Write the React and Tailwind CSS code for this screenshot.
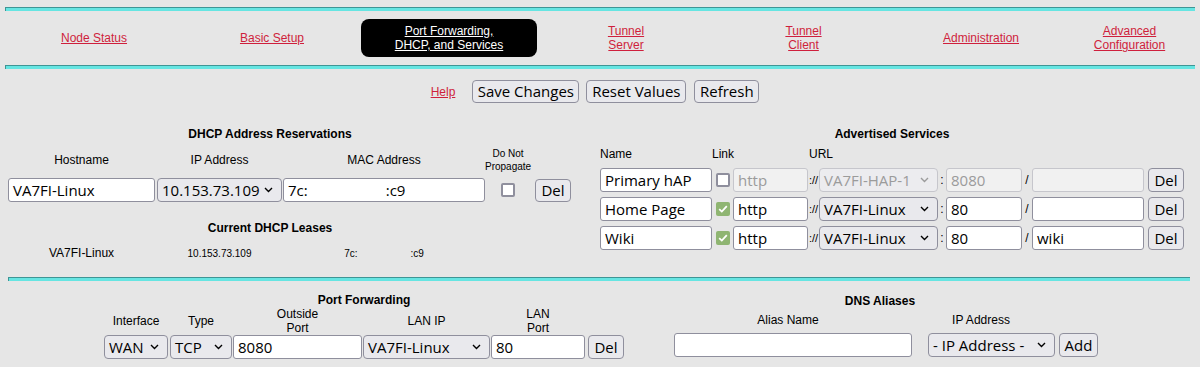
import React from "react";
import clsx from "clsx";

const formFont = "font-['Open_Sans',sans-serif] text-[15px]";

const Chevron = () => (
  <svg width="9" height="6" viewBox="0 0 9 6" className="shrink-0">
    <path d="M1 1l3.5 3.5L8 1" fill="none" stroke="currentColor" strokeWidth="1.4" />
  </svg>
);

const Field = ({ className, value, disabled, children }) => (
  <div
    className={clsx(
      "h-[24px] shrink-0 flex items-center px-[4px] rounded-[3px] border whitespace-nowrap overflow-hidden",
      formFont,
      disabled ? "border-[#c6c6cc] bg-[#f1f1f1] text-[#9b9b9b]" : "border-[#8f8f9d] bg-white text-black",
      className
    )}
  >
    {children ?? value}
  </div>
);

const Select = ({ className, value, disabled }) => (
  <div
    className={clsx(
      "h-[24px] shrink-0 flex items-center justify-between pl-[4px] pr-[8px] rounded-[4px] border whitespace-nowrap overflow-hidden",
      formFont,
      disabled ? "border-[#c6c6cc] bg-[#ececef] text-[#9b9b9b]" : "border-[#8f8f9d] bg-[#e9e9ed] text-black",
      className
    )}
  >
    <span>{value}</span>
    <Chevron />
  </div>
);

const Button = ({ className, children }) => (
  <div
    className={clsx(
      "h-[23px] shrink-0 flex items-center justify-center rounded-[4px] border border-[#8f8f9d] bg-[#e9e9ed] text-black",
      formFont,
      className
    )}
  >
    {children}
  </div>
);

const Check = ({ checked }) =>
  checked ? (
    <div className="w-[14px] h-[14px] shrink-0 rounded-[2px] bg-[#8fb572] flex items-center justify-center">
      <svg width="10" height="8" viewBox="0 0 10 8">
        <path d="M1.2 4.2l2.6 2.4L8.8 1.2" fill="none" stroke="white" strokeWidth="1.8" />
      </svg>
    </div>
  ) : (
    <div className="w-[14px] h-[14px] shrink-0 rounded-[2px] border-2 border-[#8f8f9d] bg-white" />
  );

const Rule = ({ className }) => (
  <div className={clsx("h-[4px] border-t border-l border-[#3f9595] bg-[#66e5e2]", className)} />
);

const NavLink = ({ children }) => (
  <a className="text-[#cf1f3c] underline leading-[14px]">{children}</a>
);

const services = [
  { name: "Primary hAP", link: false, proto: "http", host: "VA7FI-HAP-1", port: "8080", path: "", disabled: true },
  { name: "Home Page", link: true, proto: "http", host: "VA7FI-Linux", port: "80", path: "" },
  { name: "Wiki", link: true, proto: "http", host: "VA7FI-Linux", port: "80", path: "wiki" },
];

export default function App() {
  return (
    <div className="w-[1200px] h-[367px] overflow-hidden bg-[#e6e6e6] pt-[7px] font-['Liberation_Sans',Arial,sans-serif] text-[12px] text-black">
      <Rule className="mx-[5px]" />
      <nav className="mx-[5px] h-[54px] grid grid-cols-[178px_178px_176px_178px_177px_178px_1fr] items-center text-center">
        <div><NavLink>Node Status</NavLink></div>
        <div><NavLink>Basic Setup</NavLink></div>
        <div className="h-[38px] rounded-[8px] bg-black text-white flex flex-col items-center justify-center leading-[14px]">
          <a className="underline">Port Forwarding,</a>
          <a className="underline">DHCP, and Services</a>
        </div>
        <div className="flex flex-col items-center"><NavLink>Tunnel</NavLink><NavLink>Server</NavLink></div>
        <div className="flex flex-col items-center"><NavLink>Tunnel</NavLink><NavLink>Client</NavLink></div>
        <div><NavLink>Administration</NavLink></div>
        <div className="flex flex-col items-center pr-[6px]"><NavLink>Advanced</NavLink><NavLink>Configuration</NavLink></div>
      </nav>
      <Rule className="mx-[5px]" />

      <div className="mt-[11px] h-[23px] flex items-center justify-center pr-[10px]">
        <NavLink>Help</NavLink>
        <Button className="ml-[17px] w-[107px]">Save Changes</Button>
        <Button className="ml-[7px] w-[100px]">Reset Values</Button>
        <Button className="ml-[8px] w-[65px]">Refresh</Button>
      </div>

      <div className="mt-[24px] h-[150px] flex">
        {/* DHCP */}
        <div className="w-[600px] shrink-0 flex flex-col">
          <div className="w-[540px] h-[14px] leading-[14px] text-center font-bold">DHCP Address Reservations</div>
          <div className="mt-[5px] h-[28px] flex items-center pl-[8px] text-center">
            <div className="w-[147px]">Hostname</div>
            <div className="ml-[2px] w-[125px]">IP Address</div>
            <div className="ml-[1px] w-[202px]">MAC Address</div>
            <div className="w-[46px] text-[10px] leading-[13px]">Do Not<br />Propagate</div>
          </div>
          <div className="mt-[4px] h-[24px] flex items-center pl-[8px]">
            <Field className="w-[147px]" value="VA7FI-Linux" />
            <Select className="ml-[2px] w-[125px]" value="10.153.73.109" />
            <Field className="ml-[1px] w-[202px]">
              <span>7c:</span>
              <span className="ml-[78px]">:c9</span>
            </Field>
            <div className="w-[46px] flex justify-center"><Check /></div>
            <Button className="ml-[4px] w-[36px]">Del</Button>
          </div>
          <div className="mt-[19px] w-[540px] h-[14px] leading-[14px] text-center font-bold">Current DHCP Leases</div>
          <div className="mt-[11px] h-[14px] flex items-center pl-[8px] text-center">
            <div className="w-[147px]">VA7FI-Linux</div>
            <div className="ml-[2px] w-[125px] text-[10px]">10.153.73.109</div>
            <div className="ml-[1px] w-[202px] flex justify-center gap-[53px] text-[10px]">
              <span>7c:</span>
              <span>:c9</span>
            </div>
          </div>
        </div>

        {/* Advertised services */}
        <div className="flex flex-col">
          <div className="w-[584px] h-[14px] leading-[14px] text-center font-bold">Advertised Services</div>
          <div className="mt-[6px] h-[14px] leading-[14px] flex">
            <div className="w-[112px]">Name</div>
            <div className="w-[97px]">Link</div>
            <div>URL</div>
          </div>
          <div className="mt-[7px] flex flex-col gap-[5px]">
            {services.map((s) => (
              <div key={s.name} className="h-[24px] flex items-center">
                <Field className="w-[112px]" value={s.name} />
                <div className="ml-[4px]"><Check checked={s.link} /></div>
                <Field className="ml-[3px] w-[75px]" value={s.proto} disabled={s.disabled} />
                <span className="w-[11px] text-center text-[11px]">://</span>
                <Select className="w-[119px]" value={s.host} disabled={s.disabled} />
                <span className="w-[8px] text-center">:</span>
                <Field className="w-[76px]" value={s.port} disabled={s.disabled} />
                <span className="w-[10px] text-center">/</span>
                <Field className="w-[112px]" value={s.path} disabled={s.disabled} />
                <Button className="ml-[4px] w-[36px] h-[24px]">Del</Button>
              </div>
            ))}
          </div>
        </div>
      </div>

      <Rule className="ml-[8px] mr-[10px]" />

      <div className="flex">
        {/* Port forwarding */}
        <div className="ml-[104px] w-[520px] shrink-0 flex flex-col">
          <div className="mt-[13px] h-[13px] leading-[13px] text-center font-bold">Port Forwarding</div>
          <div className="h-[28px] flex items-center text-center leading-[14px]">
            <div className="w-[64px]">Interface</div>
            <div className="ml-[2px] w-[62px]">Type</div>
            <div className="ml-[1px] w-[129px]">Outside<br />Port</div>
            <div className="ml-[1px] w-[127px]">LAN IP</div>
            <div className="ml-[1px] w-[94px]">LAN<br />Port</div>
          </div>
          <div className="h-[24px] flex items-center">
            <Select className="w-[64px]" value="WAN" />
            <Select className="ml-[2px] w-[62px]" value="TCP" />
            <Field className="ml-[1px] w-[129px]" value="8080" />
            <Select className="ml-[1px] w-[127px]" value="VA7FI-Linux" />
            <Field className="ml-[1px] w-[94px]" value="80" />
            <Button className="ml-[3px] w-[36px] h-[24px]">Del</Button>
          </div>
        </div>

        {/* DNS aliases */}
        <div className="ml-[50px] flex flex-col">
          <div className="mt-[13px] w-[412px] h-[14px] leading-[14px] text-center font-bold">DNS Aliases</div>
          <div className="mt-[5px] h-[14px] leading-[14px] flex text-center">
            <div className="w-[228px]">Alias Name</div>
            <div className="w-[158px]">IP Address</div>
          </div>
          <div className="mt-[6px] h-[24px] flex items-center">
            <Field className="w-[238px]" value="" />
            <Select className="ml-[16px] w-[127px]" value="- IP Address -" />
            <Button className="ml-[4px] w-[39px] h-[24px]">Add</Button>
          </div>
        </div>
      </div>
    </div>
  );
}
